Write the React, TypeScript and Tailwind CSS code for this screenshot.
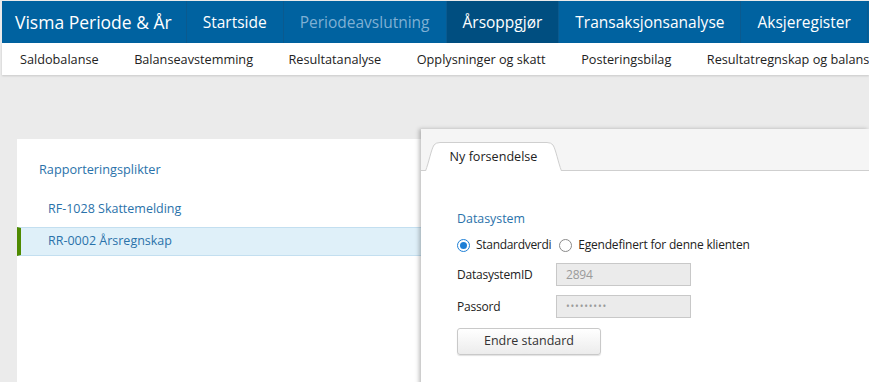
const topNav = [
  { label: "Startside", state: "normal" },
  { label: "Periodeavslutning", state: "disabled" },
  { label: "Årsoppgjør", state: "active" },
  { label: "Transaksjonsanalyse", state: "normal" },
  { label: "Aksjeregister", state: "normal" },
];

const subNav = [
  "Saldobalanse",
  "Balanseavstemming",
  "Resultatanalyse",
  "Opplysninger og skatt",
  "Posteringsbilag",
  "Resultatregnskap og balanse",
];

function Radio({ checked }: { checked?: boolean }) {
  return (
    <span
      className={`w-[13px] h-[13px] rounded-full border flex items-center justify-center bg-white shrink-0 ${
        checked ? "border-[#1e7fd6]" : "border-[#8a8a8a]"
      }`}
    >
      {checked && <span className="w-[7px] h-[7px] rounded-full bg-[#1e7fd6]" />}
    </span>
  );
}

export default function App() {
  return (
    <div
      className="w-[869px] h-[382px] overflow-hidden bg-[#ebebeb] flex flex-col text-[#222] whitespace-nowrap"
      style={{ fontFamily: '"Open Sans", "Noto Sans", sans-serif' }}
    >
      {/* topplinje */}
      <div className="mt-px ml-[2px] h-[42px] bg-[#0062a0] flex items-stretch text-white shrink-0">
        <div className="pl-[13px] pr-[14px] pt-px flex items-center text-[17.5px] border-r border-[#0a5a8f] shrink-0">
          Visma Periode &amp; År
        </div>
        {topNav.map((item) => (
          <div
            key={item.label}
            className={`px-4 pt-px flex items-center text-[15.5px] border-r border-[#0a5a8f] shrink-0 ${
              item.state === "active" ? "bg-[#004e80]" : ""
            } ${item.state === "disabled" ? "text-[#7fb0d4]" : ""}`}
          >
            {item.label}
          </div>
        ))}
      </div>

      {/* undermeny */}
      <div className="ml-[2px] h-[32px] bg-white flex items-center text-[12.7px] shrink-0 shadow-[0_1px_2px_rgba(0,0,0,0.15)]">
        <div className="flex gap-[35.5px] pl-[18px] pt-[2px]">
          {subNav.map((s) => (
            <span key={s}>{s}</span>
          ))}
        </div>
      </div>

      {/* innhold */}
      <div className="flex-1 flex items-start pt-[54px] min-h-0">
        <div className="ml-[17px] mt-[10px] w-[404px] h-[300px] bg-white">
          <div className="pl-[22px] pt-[21px] text-[12.7px] text-[#2a72aa]">Rapporteringsplikter</div>
          <div className="mt-[16px] flex flex-col text-[12.5px] text-[#2a72aa]">
            <div className="h-[28px] flex items-center pl-[31px]">RF-1028 Skattemelding</div>
            <div className="mt-[4px] h-[29px] flex items-center pl-[27px] bg-[#dff0f9] border-y border-[#c3dff0] border-l-4 border-l-[#4f8a00]">
              RR-0002 Årsregnskap
            </div>
          </div>
        </div>

        <div className="flex-1 h-[300px] bg-white shadow-[-2px_0_4px_rgba(0,0,0,0.25)] flex flex-col">
          <div className="h-[42px] bg-[#f5f5f5] border-b border-[#cfcfcf] flex items-end pl-[4px] shrink-0">
            <div className="relative h-[29px] w-[137px] -mb-px">
              <svg className="absolute inset-0" width="137" height="29" viewBox="0 0 137 29">
                <path
                  d="M0.5 29 C4 20 6 8 9 3 Q11 0.5 15 0.5 L122 0.5 Q126 0.5 128 3 C131 8 133 20 136.5 29"
                  fill="#ffffff"
                  stroke="#cfcfcf"
                />
              </svg>
              <span className="relative flex h-full items-center justify-center pt-px text-[12.6px] text-[#222]">
                Ny forsendelse
              </span>
            </div>
          </div>

          <div className="pl-[36px] pt-[39px]">
            <div className="text-[12.4px] text-[#2a72aa] leading-[18px]">Datasystem</div>
            <div className="mt-[8px] h-[18px] flex items-center text-[12px] tracking-[-0.3px]">
              <Radio checked />
              <span className="ml-[6px]">Standardverdi</span>
              <span className="ml-[8px]">
                <Radio />
              </span>
              <span className="ml-[6px] tracking-[-0.2px]">Egendefinert for denne klienten</span>
            </div>

            <div className="mt-[9px] flex items-center h-[23px] text-[12px] tracking-[-0.2px]">
              <span className="w-[99px]">DatasystemID</span>
              <div className="w-[135px] h-[23px] bg-[#ebebeb] border border-[#c8c8c8] flex items-center pl-[9px] text-[#9a9a9a]">
                2894
              </div>
            </div>
            <div className="mt-[9px] flex items-center h-[23px] text-[12px] tracking-[-0.2px]">
              <span className="w-[99px]">Passord</span>
              <div className="w-[135px] h-[23px] bg-[#ebebeb] border border-[#c8c8c8] flex items-center pl-[9px] text-[#9a9a9a] text-[10px] tracking-[0.8px]">
                •••••••••
              </div>
            </div>

            <button className="mt-[10px] w-[144px] h-[27px] rounded-[3px] border border-[#c9c9c9] bg-gradient-to-b from-white to-[#ececec] shadow-[0_1px_1px_rgba(0,0,0,0.12)] text-[12.5px] text-[#333]">
              Endre standard
            </button>
          </div>
        </div>
      </div>
    </div>
  );
}
